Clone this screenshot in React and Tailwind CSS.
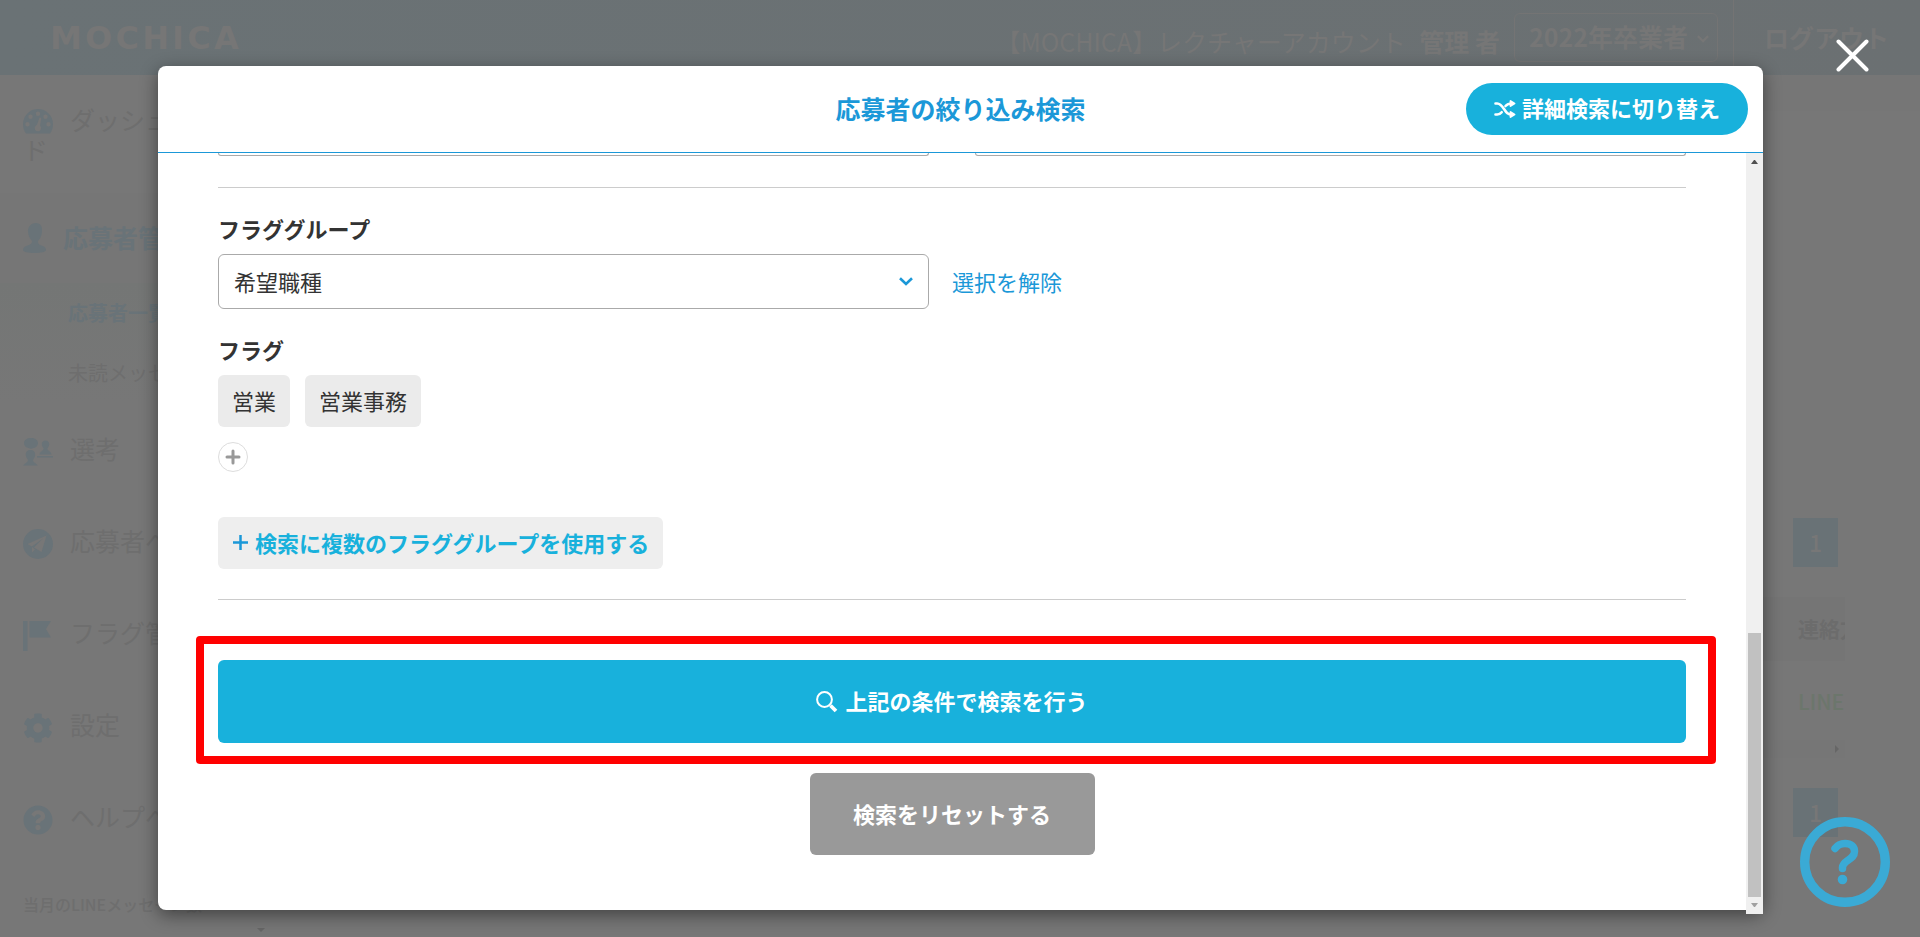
import { FaCog, FaQuestionCircle } from "react-icons/fa";

const GaugeIcon = () => (
  <svg className="h-[25px] w-[30px]" viewBox="0 0 30 25" fill="currentColor" aria-hidden="true">
    <path
      fillRule="evenodd"
      d="M15 0a15 15 0 0 1 15 15c0 4-1 7-3 9.500H3C1 22 0 19 0 15A15 15 0 0 1 15 0ZM15 2.500a2.200 2.200 0 1 0 0 4.400 2.200 2.200 0 0 0 0-4.400ZM7.500 5.500a2.200 2.200 0 1 0 0 4.400 2.200 2.200 0 0 0 0-4.400ZM22.500 5.500a2.200 2.200 0 1 0 0 4.400 2.200 2.200 0 0 0 0-4.400ZM4.500 13a2.200 2.200 0 1 0 0 4.400 2.200 2.200 0 0 0 0-4.400ZM25.500 13a2.200 2.200 0 1 0 0 4.400 2.200 2.200 0 0 0 0-4.400ZM16.500 8.500l-2.600 7.600a3.200 3.200 0 1 0 3.200 0.700l1.200-7.700Z"
    />
  </svg>
);

const UserIcon = () => (
  <svg className="inline-block h-[30px] w-[23px]" viewBox="0 0 23 30" fill="currentColor" aria-hidden="true">
    <path d="M13 0C18 0 19.500 4 19 9c-.4 4-2 7-4 9 0 3 1 3.500 3.500 4.500 3 1 4.500 2.200 4.500 4.500 0 2-5 3-11.500 3S0 29 0 27c0-2.300 1.500-3.500 4.500-4.500C7 21.500 9 21 9 18c-2-2-3.600-5-4-9-.5-5 3-9 8-9Z" />
  </svg>
);

const InterviewIcon = () => (
  <svg className="inline-block h-[28px] w-[30px]" viewBox="0 0 30 28" fill="currentColor" aria-hidden="true">
    <path d="M8 0c4 0 7 2 7 5s-2 4.500-4.500 5L8 11l-2.500-1C3 9.500 1 8 1 5s3-5 7-5Z" />
    <path d="M7.500 12c3 0 5 2 4.700 5-.2 2-1.200 3.500-2.200 5 .3 2.500 2 2.500 5 5.500H0c3-3 4.700-3 5-5.500-1-1.500-2-3-2.200-5-.3-3 1.700-5 4.700-5Z" />
    <path d="M22.500 2.500c2.500 0 4 1.700 3.700 4-.2 1.700-1 3-1.900 4 .2 2.500 4 2.500 4.200 6h-12c.2-3.500 4-3.500 4.200-6-.9-1-1.700-2.300-1.900-4-.3-2.300 1.200-4 3.700-4ZM14 18h16v1.500H14Z" />
  </svg>
);

const PlaneIcon = () => (
  <svg className="inline-block h-[30px] w-[30px]" viewBox="0 0 30 30" fill="currentColor" aria-hidden="true">
    <path fillRule="evenodd" d="M15 0a15 15 0 1 1 0 30 15 15 0 0 1 0-30ZM23.500 6.500 4.500 15l4.200 2.400L20 9.500 11 18.500l7.500 4.500ZM9 18v5.500l3-3Z" />
  </svg>
);

const FlagIcon = () => (
  <svg className="inline-block h-[30px] w-[28px]" viewBox="0 0 28 30" fill="currentColor" aria-hidden="true">
    <path d="M0 0h4.500v30H0ZM6.500 0H28l-5 8 5 8.500H6.500Z" />
  </svg>
);

const ShuffleIcon = () => (
  <svg className="mt-1 h-[18px] w-[22px]" viewBox="0 0 22 18" aria-hidden="true">
    <g fill="none" stroke="currentColor" strokeWidth="2.600" strokeLinecap="round">
      <path d="M1.500 3.500h1.700c2.700 0 4.300 1.700 6.800 5.500s4 5.500 8 5.500" />
      <path d="M1.500 14.500h1.700c2 0 3.300-.8 4.500-2.300M11.500 6C13 4.200 14.500 3.500 18 3.500" />
    </g>
    <path
      d="M16.500 1v5l4-2.500ZM16.500 12v5l4-2.500Z"
      fill="currentColor"
      stroke="currentColor"
      strokeWidth="1.800"
      strokeLinejoin="round"
    />
  </svg>
);

const SearchIcon = () => (
  <svg className="mt-[2px] h-[22px] w-[22px]" viewBox="0 0 22 22" fill="none" stroke="currentColor" aria-hidden="true">
    <circle cx="8.500" cy="8.500" r="7.400" strokeWidth="2" />
    <path d="M14.500 14.500 20 20" strokeWidth="3.800" />
  </svg>
);

const Chevron = ({ className }) => (
  <svg className={className} viewBox="0 0 14 9" fill="none" stroke="currentColor" strokeWidth="2.600" aria-hidden="true">
    <path d="M1 1.200 7 7l6-5.800" />
  </svg>
);

const menu = [
  { label: "選考", icon: <InterviewIcon /> },
  { label: "応募者へ", icon: <PlaneIcon /> },
  { label: "フラグ管理", icon: <FlagIcon /> },
  { label: "設定", icon: <FaCog className="inline-block" size={30} /> },
  { label: "ヘルプへ", icon: <FaQuestionCircle className="inline-block" size={30} /> },
];

const Header = () => (
  <header className="flex h-[75px] shrink-0 items-stretch bg-[#6b7174] bg-linear-to-r from-[#6a7275] to-[#6b7072] text-[25px] text-[#767676]">
    <div className="flex items-center pl-[50px] font-['DejaVu_Sans'] text-[32px] font-bold tracking-widest">
      MOCHICA
    </div>
    <div className="ml-auto flex items-center">
      <p className="mr-[14px] pt-2 whitespace-nowrap">
        【MOCHICA】レクチャーアカウント <b className="ml-2">管理 者</b>
      </p>
      <div className="relative mr-[15px]">
        <select
          aria-label="卒業年度"
          className="h-[49px] w-[204px] appearance-none rounded-md border border-[#747474] pb-[2px] pl-[14px] font-bold"
        >
          <option>2022年卒業者</option>
        </select>
        <Chevron className="absolute top-[22px] right-[9px] h-2 w-3" />
      </div>
    </div>
    <a href="#logout" className="flex w-[187px] items-center border-l border-[#747474] pl-[30px] font-bold">
      ログアウト
    </a>
  </header>
);

const Sidebar = () => (
  <nav className="w-[230px] shrink-0 pl-[23px] text-[25px] whitespace-nowrap text-[#6e6e6e]">
    <a href="#dashboard" className="flex h-[118px] flex-wrap content-start gap-x-[17px] pt-[29px] leading-[30px]">
      <span className="flex h-[30px] w-[30px] items-end pt-[9px] text-[#697378]">
        <GaugeIcon />
      </span>
      ダッシュボー
      <span className="w-full">ド</span>
    </a>
    <a href="#applicants" className="-ml-[23px] flex h-[90px] items-center gap-[17px] bg-[#767676] pl-[23px] font-bold text-[#697378]">
      <UserIcon />
      応募者管理
    </a>
    <div className="-ml-[23px] h-[121px] bg-[#757776] bg-linear-to-b from-[#747675] to-[#777777] pl-[68px] text-[20px] leading-[60px]">
      <a href="#list" className="block font-bold text-[#697378]">応募者一覧</a>
      <a href="#unread" className="block">未読メッセージ</a>
    </div>
    {menu.map((item) => (
      <a href={`#${item.label}`} className="flex h-[92px] items-center pb-[2px]" key={item.label}>
        <span className="w-[47px] text-[#697378]">{item.icon}</span>
        {item.label}
      </a>
    ))}
    <p className="pt-[28px] text-[16px] leading-6 font-medium">当月のLINEメッセージ数</p>
    <p className="pt-1 pl-1 text-[28px] leading-[50px] font-bold text-[#697378]">43</p>
  </nav>
);

const Badge = () => (
  <div className="ml-[30px] flex h-[49px] w-[45px] items-center justify-center bg-[#697276] text-[23px] font-medium text-[#777777]">
    1
  </div>
);

const Results = () => (
  <main className="relative flex flex-1 justify-end border-t-[36px] border-[#767676] pr-[75px] text-[21px]">
    <div className="w-[82px] overflow-hidden pt-[407px] whitespace-nowrap">
      <Badge />
      <div className="mt-[30px] h-[64px] bg-[#757575] pl-[35px] leading-[62px] font-bold text-[#6c6c6c]">連絡方法</div>
      <div className="h-[79px] pl-[35px] leading-[80px] font-medium text-[#6c766c]">LINE</div>
      <div className="mb-[30px] flex h-[18px] items-center justify-end bg-[#767676] pr-[6px]">
        <svg className="h-2 w-1" viewBox="0 0 4 8" fill="#666666">
          <path d="M0 0l4 4-4 4Z" />
        </svg>
      </div>
      <Badge />
    </div>
    {/* scroll arrow of the list pane */}
    <svg className="absolute bottom-[5px] left-[27px] h-1 w-2" viewBox="0 0 8 4" fill="#666666">
      <path d="M0 0h8L4 4Z" />
    </svg>
  </main>
);

const ScrollRail = () => (
  <div className="-mb-1 flex w-[17px] shrink-0 flex-col items-center bg-[#f0f0f0]" aria-hidden="true">
    <svg className="mt-[7px] h-1 w-[7px]" viewBox="0 0 7 4" fill="#505050">
      <path d="M0 4h7L4 0H3Z" />
    </svg>
    <div className="mt-auto h-[264px] w-[13px] bg-[#c1c1c1]" />
    <svg className="mt-[6px] mb-[7px] h-1 w-[7px]" viewBox="0 0 7 4" fill="#a0a0a0">
      <path d="M0 0h7L4 4H3Z" />
    </svg>
  </div>
);

const SearchForm = () => (
  <form className="min-w-0 flex-1 overflow-hidden px-[60px]" onSubmit={(e) => e.preventDefault()}>
    <div className="grid grid-cols-2 gap-[46px]">
      <div className="h-[3px] rounded-b-md border border-t-0 border-[#aaaaaa]" />
      <div className="h-[3px] rounded-b-md border border-t-0 border-[#aaaaaa]" />
    </div>
    <hr className="mt-[31px] border-[#cccccc]" />

    <label htmlFor="flag-group" className="mt-6 mb-[9px] block leading-[33px] font-bold">
      フラググループ
    </label>
    <div className="grid grid-cols-2 items-center gap-[46px]">
      <div className="relative">
        <select
          id="flag-group"
          className="block h-[55px] w-full appearance-none rounded-md border border-[#aaaaaa] bg-white pl-[15px]"
        >
          <option>希望職種</option>
        </select>
        <Chevron className="pointer-events-none absolute top-[23px] right-4 h-[9px] w-[14px] text-[#1b98d8]" />
      </div>
      <a href="#clear" className="-ml-[23px] text-[#1b98d8]">選択を解除</a>
    </div>

    <p className="mt-6 mb-[9px] leading-[33px] font-bold">フラグ</p>
    <div className="flex gap-[15px]">
      {["営業", "営業事務"].map((tag) => (
        <span className="flex h-[52px] items-center rounded-md bg-[#ebebeb] px-[14px] pb-[2px]" key={tag}>
          {tag}
        </span>
      ))}
    </div>
    <button
      type="button"
      aria-label="フラグを追加"
      className="mt-[15px] flex h-[30px] w-[30px] items-center justify-center rounded-full border border-[#dddddd] text-[#999999]"
    >
      <svg className="h-4 w-4" viewBox="0 0 16 16" fill="none" stroke="currentColor" strokeWidth="3" strokeLinecap="round">
        <path d="M8 2v12M2 8h12" />
      </svg>
    </button>

    <button
      type="button"
      className="mt-[45px] flex h-[52px] items-center gap-[7px] rounded-md bg-[#eeeeee] pr-[14px] pb-[2px] pl-[15px] font-bold text-[#18b1dc]"
    >
      <svg className="h-[15px] w-[15px] text-[#1b98d8]" viewBox="0 0 15 15" fill="none" stroke="currentColor" strokeWidth="2.500">
        <path d="M7.500 0v15M0 7.500h15" />
      </svg>
      検索に複数のフラググループを使用する
    </button>
    <hr className="mt-[30px] border-[#cccccc]" />

    <div className="relative mt-[60px]">
      <button
        type="submit"
        className="flex h-[83px] w-full items-center justify-center gap-[7px] rounded-md bg-[#18b1dc] pb-[2px] font-bold text-white"
      >
        <SearchIcon />
        上記の条件で検索を行う
      </button>
      <div className="pointer-events-none absolute -top-6 -right-[30px] -bottom-[21px] -left-[22px] rounded-sm border-8 border-[#ff0000]" />
    </div>
    <button type="reset" className="mx-auto mt-[30px] block h-[82px] w-[285px] rounded-md bg-[#999999] pb-[2px] font-bold text-white">
      検索をリセットする
    </button>
  </form>
);

const SearchDialog = () => (
  <div
    role="dialog"
    aria-labelledby="dialog-title"
    className="flex h-full flex-col rounded-lg bg-white text-[22px] text-[#333333] shadow-[0_5px_18px_rgba(0,0,0,0.45)]"
  >
    <div className="grid h-[87px] shrink-0 grid-cols-[1fr_auto_1fr] items-center border-b border-[#1b98d8] px-[15px]">
      <h1 id="dialog-title" className="col-start-2 text-[25px] font-bold text-[#1b98d8]">
        応募者の絞り込み検索
      </h1>
      <button
        type="button"
        className="flex h-[52px] items-center gap-[6px] justify-self-end rounded-full bg-[#18b1dc] px-[28px] pb-1 font-bold text-white"
      >
        <ShuffleIcon />
        詳細検索に切り替え
      </button>
    </div>
    <div className="flex min-h-0 flex-1">
      <SearchForm />
      <ScrollRail />
    </div>
  </div>
);

export default function App() {
  return (
    <div className="relative h-screen overflow-hidden bg-[#777777] font-['Noto_Sans_CJK_JP',sans-serif]">
      <div className="flex h-full flex-col">
        <Header />
        <div className="flex min-h-0 flex-1">
          <Sidebar />
          <Results />
        </div>
      </div>

      <div className="absolute inset-0 pt-[66px] pr-[157px] pb-[27px] pl-[158px]">
        <SearchDialog />
      </div>

      <button type="button" aria-label="閉じる" className="absolute top-[39px] right-[51px] text-white">
        <svg className="h-[33px] w-[33px]" viewBox="0 0 33 33" fill="none" stroke="currentColor" strokeWidth="4" strokeLinecap="round">
          <path d="M2.500 2.500l28 28M30.500 2.500l-28 28" />
        </svg>
      </button>
      <button type="button" aria-label="ヘルプ" className="absolute right-[30px] bottom-[30px] text-[#3aaad5]">
        <svg className="h-[90px] w-[90px]" viewBox="0 0 90 90" fill="none" stroke="currentColor" aria-hidden="true">
          <circle cx="45" cy="45" r="40.300" strokeWidth="9.400" />
          <path d="M35 31.500c2.500-3.500 6-5 10-5 6 0 9.500 3.200 9.500 8 0 8.500-12 8.500-12 16v1" strokeWidth="7.500" strokeLinecap="round" />
          <circle cx="42.500" cy="62.500" r="4.800" fill="currentColor" stroke="none" />
        </svg>
      </button>
    </div>
  );
}
